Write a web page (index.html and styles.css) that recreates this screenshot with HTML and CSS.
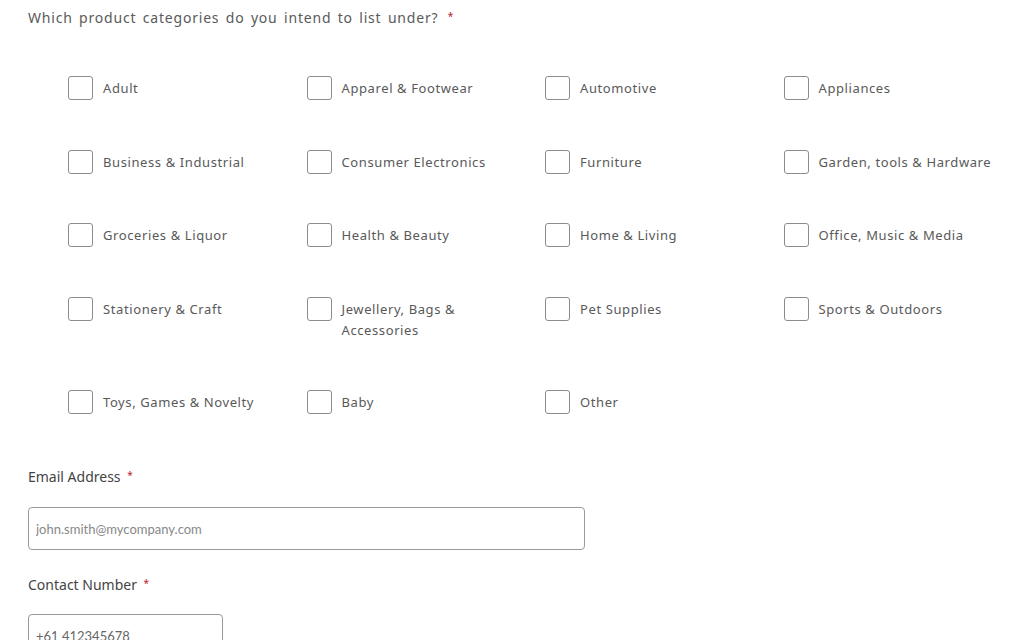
FILE: index.html
```html
<!DOCTYPE html>
<html lang="en">
<head>
    <meta charset="UTF-8">
    <title>Seller Application</title>
    <link rel="stylesheet" href="styles.css">
</head>
<body>
    <form class="form">
        <p class="question">Which product categories do you intend to list under? <span class="req">*</span></p>

        <div class="categories">
            <label class="cat"><input type="checkbox"><span>Adult</span></label>
            <label class="cat"><input type="checkbox"><span>Apparel &amp; Footwear</span></label>
            <label class="cat"><input type="checkbox"><span>Automotive</span></label>
            <label class="cat"><input type="checkbox"><span>Appliances</span></label>

            <label class="cat"><input type="checkbox"><span>Business &amp; Industrial</span></label>
            <label class="cat"><input type="checkbox"><span>Consumer Electronics</span></label>
            <label class="cat"><input type="checkbox"><span>Furniture</span></label>
            <label class="cat"><input type="checkbox"><span>Garden, tools &amp; Hardware</span></label>

            <label class="cat"><input type="checkbox"><span>Groceries &amp; Liquor</span></label>
            <label class="cat"><input type="checkbox"><span>Health &amp; Beauty</span></label>
            <label class="cat"><input type="checkbox"><span>Home &amp; Living</span></label>
            <label class="cat"><input type="checkbox"><span>Office, Music &amp; Media</span></label>

            <label class="cat"><input type="checkbox"><span>Stationery &amp; Craft</span></label>
            <label class="cat"><input type="checkbox"><span>Jewellery, Bags &amp;<br>Accessories</span></label>
            <label class="cat"><input type="checkbox"><span>Pet Supplies</span></label>
            <label class="cat"><input type="checkbox"><span>Sports &amp; Outdoors</span></label>

            <label class="cat"><input type="checkbox"><span>Toys, Games &amp; Novelty</span></label>
            <label class="cat"><input type="checkbox"><span>Baby</span></label>
            <label class="cat"><input type="checkbox"><span>Other</span></label>
        </div>

        <label class="field-label" for="email">Email Address <span class="req">*</span></label>
        <input class="text-input email" id="email" type="email" placeholder="john.smith@mycompany.com">

        <label class="field-label" for="phone">Contact Number <span class="req">*</span></label>
        <input class="text-input phone" id="phone" type="tel" value="+61 412345678">
    </form>
</body>
</html>
```

FILE: styles.css
```css
body {
    margin: 0;
    background: #fff;
    font-family: "Noto Sans", Arial, sans-serif;
    color: #555;
}
.form {
    padding: 8px 0 0 28px;
}
.question {
    margin: 0;
    font-size: 14px;
    line-height: 20px;
    letter-spacing: 0.8px;
    word-spacing: 2px;
    color: #5a5a5a;
}
.req {
    color: #b4202a;
    font-size: 10px;
    line-height: 0;
    vertical-align: 3px;
    margin-left: 3px;
    letter-spacing: 0;
}
.categories {
    display: grid;
    grid-template-columns: repeat(4, 238.5px);
    row-gap: 49.5px;
    margin: 48px 0 0 40px;
}
.cat {
    display: flex;
    align-items: flex-start;
    font-size: 13px;
    line-height: 21px;
    letter-spacing: 0.6px;
    color: #595959;
}
.cat input {
    appearance: none;
    width: 25px;
    height: 24px;
    margin: 0 10px 0 0;
    border: 1px solid #8c8c8c;
    border-radius: 3px;
    background: #fff;
    flex: none;
}
.cat span {
    padding-top: 2px;
}
.field-label {
    display: block;
    font-size: 14px;
    line-height: 22px;
    color: #444;
}
.categories + .field-label {
    margin-top: 52px;
}
.text-input {
    display: block;
    box-sizing: border-box;
    height: 43px;
    margin: 19px 0 24px;
    padding: 0 7px;
    border: 1px solid #9a9a9a;
    border-radius: 4px;
    font-family: Lato, "Noto Sans", sans-serif;
    font-size: 13px;
    color: #666;
}
.text-input::placeholder {
    color: #888;
}
.email {
    width: 557px;
}
.phone {
    width: 195px;
    margin: 18px 0 0;
}
```
